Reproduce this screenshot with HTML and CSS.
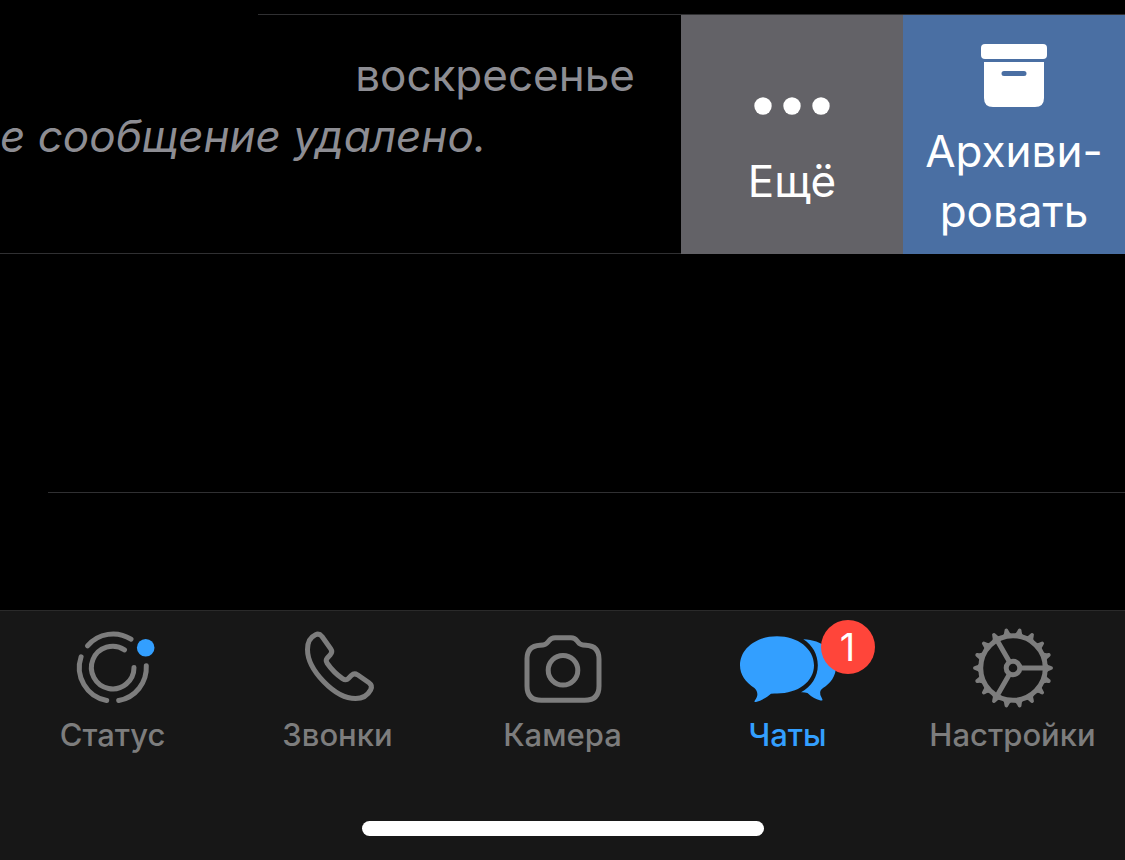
FILE: index.html
```html
<!DOCTYPE html>
<html lang="ru">
<head>
    <meta charset="UTF-8">
    <meta name="viewport" content="width=device-width, initial-scale=1.0">
    <title>Чаты</title>
    <link rel="stylesheet" href="styles.css">
</head>
<body>
    <main class="chat-list">
        <div class="previous-chat"></div>
        <div class="chat-row">
            <div class="chat-content">
                <time class="chat-time">воскресенье</time>
                <p class="chat-message">е сообщение удалено.</p>
            </div>
            <button type="button" class="action more">
                <svg class="action-icon" viewBox="0 0 76 64">
                    <circle cx="9" cy="32" r="8.7"/>
                    <circle cx="38" cy="32" r="8.7"/>
                    <circle cx="67" cy="32" r="8.7"/>
                </svg>
                <span>Ещё</span>
            </button>
            <button type="button" class="action archive">
                <svg class="action-icon" viewBox="0 0 76 64">
                    <rect x="5" y="0" width="66" height="15" rx="4"/>
                    <path fill-rule="evenodd" d="M8 18H68V54Q68 63 59 63H17Q8 63 8 54ZM28 27a2.3 2.3 0 0 0 0 5H48a2.3 2.3 0 0 0 0-5Z"/>
                </svg>
                <span>Архиви-<br>ровать</span>
            </button>
        </div>
        <div class="empty-row"></div>
    </main>

    <footer class="bottom-bar">
        <nav class="tabs">
            <a href="#status" class="tab">
                <span class="tab-icon">
                    <svg viewBox="0 0 100 80">
                        <g class="line">
                            <path d="M24.5 17.8A33.5 33.5 0 0 1 68 11.2"/>
                            <path d="M18.1 28.8A33.5 33.5 0 0 0 43.7 72.5"/>
                            <path d="M55.7 72.5A33.5 33.5 0 0 0 83.3 37.7"/>
                            <path d="M61.5 21.8A21.3 21.3 0 1 0 71 39.5"/>
                        </g>
                        <circle class="dot" cx="82.7" cy="19.7" r="8.8"/>
                    </svg>
                </span>
                <span>Статус</span>
            </a>
            <a href="#calls" class="tab">
                <span class="tab-icon">
                    <svg viewBox="0 0 100 80">
                        <path class="line" d="M34 8.5L42.7 20.8Q44.8 23.8 42.5 26.5L39.3 30Q37.3 32.3 39 35Q45.5 44.5 54.5 50.6Q58 53 60.6 50.3L63.5 47.3Q66.2 44.8 69.5 46.8L81 54.8Q84.9 57.6 82.7 61.7C79.5 67.7 74.5 70.6 67.5 70.6C47 70.6 19.5 42 19.5 21.5C19.5 13.5 22.8 8.8 27.5 6.7Q31.2 5 34 8.5Z"/>
                    </svg>
                </span>
                <span>Звонки</span>
            </a>
            <a href="#camera" class="tab">
                <span class="tab-icon">
                    <svg viewBox="0 0 100 80">
                        <g class="line">
                            <path d="M14 31Q14 17.8 27 17.2L30 17Q32.8 16.8 35 14L36 12.7Q38.3 9.7 42 9.7H58Q61.7 9.7 64 12.7L65 14Q67.2 16.8 70 17L73 17.2Q86 17.8 86 31V58Q86 72.3 71.7 72.3H28.3Q14 72.3 14 58Z"/>
                            <circle cx="50" cy="42.3" r="14.8"/>
                        </g>
                    </svg>
                </span>
                <span>Камера</span>
            </a>
            <a href="#chats" class="tab active">
                <span class="tab-icon">
                    <svg viewBox="0 0 100 80">
                        <path class="solid" d="M39 8.2C60 8.2 76 20.8 76 37.3S60 65.5 39 65.5Q35.5 65.2 33 65.7Q26 72 18 74Q15.5 74.2 17 72.3C20 68.3 20.5 64 16.4 60C7.5 54.3 2 46.5 2 37.3C2 20.8 18 8.2 39 8.2Z"/>
                        <path class="solid" d="M65.3 11.3C84 12 98 23 98 38.5C98 48 92.5 55.5 85 60Q79.5 63.5 84 70.5Q85.5 73 82.5 72.5Q75 70.5 69.5 65Q66 64 63 64.3C73.5 59 79.8 48.5 79.8 37.3C79.8 26.5 74.5 17 65.3 11.3Z"/>
                    </svg>
                    <span class="badge">1</span>
                </span>
                <span>Чаты</span>
            </a>
            <a href="#settings" class="tab">
                <span class="tab-icon">
                    <svg viewBox="0 0 100 80">
                        <defs>
                            <path id="tooth" d="M44.5 7Q47.5 5.5 48 2Q48.3 0 50 0T52 2Q52.5 5.5 55.5 7Z"/>
                            <g id="teeth">
                                <use href="#tooth" transform="rotate(10 50 40)"/>
                                <use href="#tooth" transform="rotate(30 50 40)"/>
                                <use href="#tooth" transform="rotate(50 50 40)"/>
                            </g>
                        </defs>
                        <g class="solid">
                            <use href="#teeth"/>
                            <use href="#teeth" transform="rotate(60 50 40)"/>
                            <use href="#teeth" transform="rotate(120 50 40)"/>
                            <use href="#teeth" transform="rotate(180 50 40)"/>
                            <use href="#teeth" transform="rotate(240 50 40)"/>
                            <use href="#teeth" transform="rotate(300 50 40)"/>
                        </g>
                        <g class="line">
                            <circle cx="50" cy="40" r="32.3"/>
                            <circle cx="50" cy="40" r="6.8"/>
                            <path d="M58 40H81M46 33L34.5 13M46 47L34.5 67"/>
                        </g>
                    </svg>
                </span>
                <span>Настройки</span>
            </a>
        </nav>
        <div class="home-indicator"></div>
    </footer>
</body>
</html>
```
FILE: styles.css
```css
* {
    box-sizing: border-box;
}

body {
    margin: 0;
    min-height: 100vh;
    display: flex;
    flex-direction: column;
    background: #000;
    color: #8d8d93;
    font-family: Inter, "Liberation Sans", sans-serif;
    overflow-x: hidden;
}

.chat-list {
    flex: 1;
}

.previous-chat {
    height: 15px;
    margin-left: 258px;
    border-bottom: 1px solid #303032;
}

.chat-row {
    display: flex;
    min-height: 239px;
    font-size: 44px;
    line-height: 60px;
}

.chat-content {
    flex: 1;
    padding: 30px 46px 0 0;
    border-bottom: 1px solid #303032;
    line-height: 61px;
}

.chat-time {
    display: block;
    text-align: right;
}

.chat-message {
    margin: 0;
    font-style: italic;
}

.action {
    flex: 0 0 222px;
    display: flex;
    flex-direction: column;
    align-items: center;
    justify-content: center;
    gap: 13px;
    padding: 15px 0 0;
    border: none;
    color: #fff;
    font: inherit;
    cursor: pointer;
}

.action-icon {
    width: 76px;
    height: 64px;
    fill: currentColor;
}

.more {
    background: #636267;
}

.archive {
    background: #4a6fa3;
}

.empty-row {
    height: 239px;
    margin-left: 48px;
    border-bottom: 1px solid #303032;
}

.bottom-bar {
    padding: 17px 0 24px;
    background: #171717;
    border-top: 1px solid #2a2a2a;
}

.tabs {
    display: grid;
    grid-template-columns: repeat(5, 1fr);
}

.tab {
    display: flex;
    flex-direction: column;
    align-items: center;
    gap: 9px;
    color: #7d7d7d;
    font-size: 31px;
    font-weight: 500;
    line-height: 36px;
    text-decoration: none;
}

.tab.active {
    color: #339fff;
}

.tab-icon {
    position: relative;
    width: 100px;
    height: 80px;
}

.tab-icon svg {
    display: block;
    width: 100%;
    height: 100%;
}

.line {
    fill: none;
    stroke: currentColor;
    stroke-width: 5;
    stroke-linecap: round;
    stroke-linejoin: round;
}

.solid {
    fill: currentColor;
}

.dot {
    fill: #339fff;
}

.badge {
    position: absolute;
    top: -8px;
    left: 83px;
    width: 54px;
    height: 54px;
    border-radius: 50%;
    background: #ff453a;
    color: #fff;
    font-size: 38px;
    font-weight: 400;
    line-height: 54px;
    text-align: center;
}

.home-indicator {
    width: 402px;
    max-width: 60%;
    height: 15px;
    margin: 68px auto 0;
    border-radius: 8px;
    background: #fff;
}
```
